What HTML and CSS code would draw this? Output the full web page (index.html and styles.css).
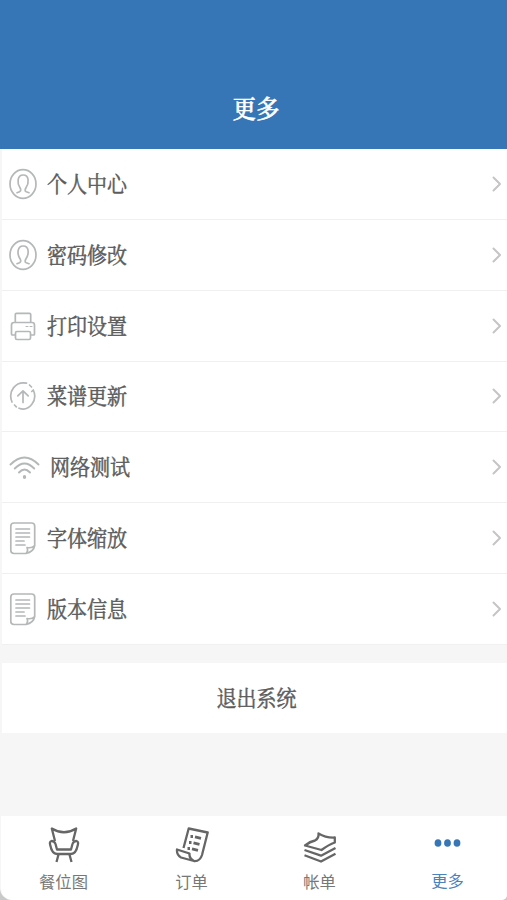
FILE: index.html
```html
<!DOCTYPE html>
<html lang="zh-CN">
<head>
  <meta charset="UTF-8">
  <title>更多</title>
  <link rel="stylesheet" href="styles.css">
</head>
<body>

  <!-- Shared icon shapes -->
  <svg class="icon-defs" width="0" height="0">
    <symbol id="icon-user" viewBox="0 0 28 32">
      <ellipse cx="14" cy="16" rx="13" ry="14.3"/>
      <path d="M8 24.700l2.500-1c1.600-.700 1.500-2.100.5-4-3.100-4.700-2.900-12.700 3.200-12.700s6 8 2.800 12.700c-1.100 1.900-1.300 3.300.3 4l2.700 1"/>
    </symbol>
    <symbol id="icon-doc" viewBox="0 0 28 34">
      <path d="M17 32.500H5Q1.800 32.500 1.800 29.500V5Q1.800 2 5 2H22.500Q25.700 2 25.700 5V24.500Q24.500 31 17 32.500Q19.500 30 18 26.500Q23 27.500 25.700 24.500"/>
      <path d="M7 8h13.500M7 12h13.500M7 16h13.500M7 20h8M7 24h9"/>
    </symbol>
    <symbol id="icon-arrow" viewBox="0 0 10 16">
      <path d="M1.500 1.500L8 8L1.500 14.500"/>
    </symbol>
  </svg>

  <div class="page">
    <header class="header">
      <h1>更多</h1>
    </header>

    <ul class="menu">
      <li class="menu-item">
        <svg class="icon" width="28" height="32"><use href="#icon-user"/></svg>
        <span class="label">个人中心</span>
        <svg class="arrow" width="10" height="16"><use href="#icon-arrow"/></svg>
      </li>
      <li class="menu-item">
        <svg class="icon" width="28" height="32"><use href="#icon-user"/></svg>
        <span class="label">密码修改</span>
        <svg class="arrow" width="10" height="16"><use href="#icon-arrow"/></svg>
      </li>
      <li class="menu-item">
        <svg class="icon" width="28" height="32" viewBox="0 0 28 32">
          <path d="M6.300 12V4.500Q6.300 3.300 7.500 3.300H20.500Q21.700 3.300 21.700 4.500V12"/>
          <path d="M6 25H3.500Q2.500 25 2.500 24V15Q2.500 12.500 5 12.500H23Q25.500 12.500 25.500 15V24Q25.500 25 24.500 25H22"/>
          <rect x="6.500" y="21.500" width="15" height="8" rx="1.500"/>
          <path class="faint" d="M17 16.500h2M21 16.500h2"/>
        </svg>
        <span class="label">打印设置</span>
        <svg class="arrow" width="10" height="16"><use href="#icon-arrow"/></svg>
      </li>
      <li class="menu-item">
        <svg class="icon" width="28" height="32" viewBox="0 0 28 32">
          <path d="M17.500 3.200C7 1 -1.500 11 3 22M10 28.200C20.500 32 29 20 24.300 10L22.800 11.500M20.500 5L22.500 7M5.500 25L7.300 26.800"/>
          <path d="M14 22.500V11M8.800 15.900L14 10.800L19.200 15.900"/>
        </svg>
        <span class="label">菜谱更新</span>
        <svg class="arrow" width="10" height="16"><use href="#icon-arrow"/></svg>
      </li>
      <li class="menu-item">
        <svg class="icon icon-wifi" width="31" height="28" viewBox="0 0 31 28">
          <path d="M1.500 11.500Q15.500-2.500 29.500 11.500M5.800 15.500Q15.500 5.500 25.200 15.500M10 19.500Q15.500 13.500 21 19.500"/>
          <ellipse class="dot" cx="15.500" cy="24" rx="1.700" ry="1.900"/>
        </svg>
        <span class="label">网络测试</span>
        <svg class="arrow" width="10" height="16"><use href="#icon-arrow"/></svg>
      </li>
      <li class="menu-item">
        <svg class="icon" width="28" height="34"><use href="#icon-doc"/></svg>
        <span class="label">字体缩放</span>
        <svg class="arrow" width="10" height="16"><use href="#icon-arrow"/></svg>
      </li>
      <li class="menu-item">
        <svg class="icon" width="28" height="34"><use href="#icon-doc"/></svg>
        <span class="label">版本信息</span>
        <svg class="arrow" width="10" height="16"><use href="#icon-arrow"/></svg>
      </li>
    </ul>

    <button class="logout"><span class="label">退出系统</span></button>

    <!-- Bottom navigation -->
    <nav class="tabs">
      <a class="tab">
        <svg width="32" height="38" viewBox="0 0 32 38">
          <path d="M7 16L3.800 3.500Q16 11 28.200 3.500L25 16"/>
          <path d="M9 24.500L7.500 19Q6.500 16 3.500 16Q1.200 16.500 2.200 20Q4 29 9 29H23Q28 29 29.800 20Q30.800 16.500 28.500 16Q25.500 16 24.500 19L23 24.500Z"/>
          <path d="M10.500 29.500L8.500 37M21.500 29.500L23.500 37"/>
        </svg>
        <span>餐位图</span>
      </a>
      <a class="tab">
        <svg width="34" height="38" viewBox="0 0 34 38">
          <path d="M8.500 23L13.700 3.500L32.700 7.500L27 30Q25 36.500 19 36L6 32.500Q1.500 30 2 24.500L14.500 28.500Q14 33.500 19 36"/>
          <path class="lines" d="M15.500 11.500h2.500M20 11.800l6 1.500M14 17.500h2.500M18.500 17.800l6 1.500M12.500 23.500h2.500M17 23.800l6 1.500"/>
        </svg>
        <span>订单</span>
      </a>
      <a class="tab">
        <svg width="34" height="38" viewBox="0 0 34 38">
          <path d="M15.500 8.500Q23 13 31.800 12.500V17.500Q26 19.500 18.500 25L2 20.500Q7 16.500 12 15.500Q16 13.500 15.500 8.500Z"/>
          <path d="M1.500 25L18 30.700L32.500 23M1.500 30.200L18 36.500L32.500 28.700"/>
        </svg>
        <span>帐单</span>
      </a>
      <a class="tab active">
        <svg width="28" height="38" viewBox="0 0 28 38">
          <ellipse cx="4" cy="18" rx="3.400" ry="3.800"/>
          <ellipse cx="13.500" cy="18" rx="3.400" ry="3.800"/>
          <ellipse cx="23" cy="18" rx="3.400" ry="3.800"/>
        </svg>
        <span>更多</span>
      </a>
    </nav>
  </div>

</body>
</html>
```

FILE: styles.css
```css
* {
  box-sizing: border-box;
}

body {
  margin: 0;
  background: #c9c9c9;
  font-family: "Noto Serif CJK SC", "Noto Sans CJK SC", sans-serif;
  color: #5c5c5c;
}

.icon-defs {
  position: absolute;
}

.page {
  display: flex;
  flex-direction: column;
  height: 900px;
  background: #f6f6f6;
  border-radius: 0 0 5px 12px;
  overflow: hidden;
}

.header {
  display: flex;
  justify-content: center;
  height: 149px;
  padding: 90px 0 0 5px;
  background: #3676b6;
}

.header h1 {
  margin: 0;
  font-size: 23.5px;
  font-weight: 500;
  line-height: 36px;
  color: #fff;
  -webkit-text-stroke: 0.5px #fff;
  transform: scaleY(1.08);
}

.menu {
  height: 496px;
  margin: 0 0 18px;
  padding: 0 0 0 2px;
  list-style: none;
  display: grid;
  grid-template-rows: repeat(7, 1fr);
}

.menu-item {
  display: flex;
  align-items: center;
  padding: 0 5px 0 7px;
  background: #fff;
  border-bottom: 1px solid #f0f0f0;
}

.icon,
.arrow {
  flex: none;
  fill: none;
  stroke: #b4b8b8;
  stroke-width: 1.7;
  stroke-linecap: round;
  stroke-linejoin: round;
}

.icon {
  margin-right: 10px;
}

.icon-wifi {
  margin-right: 10px;
  stroke-width: 1.9;
}

.icon .dot {
  fill: #b4b8b8;
  stroke: none;
}

.icon .faint {
  stroke-width: 1;
}

.label {
  padding-bottom: 2px;
  font-size: 20px;
  font-weight: 400;
  line-height: 30px;
  -webkit-text-stroke: 0.45px #5c5c5c;
  transform: scaleY(1.08);
}

.arrow {
  margin-left: auto;
  stroke: #c5c5c5;
  stroke-width: 2;
}

.logout {
  height: 70px;
  margin: 0 0 0 2px;
  padding: 0 0 0 4px;
  border: none;
  background: #fff;
  color: inherit;
  font-family: inherit;
}

.logout .label {
  display: inline-block;
}

.tabs {
  display: grid;
  grid-template-columns: repeat(4, 128px);
  height: 84px;
  margin: auto 0 0 1px;
  padding-top: 9px;
  background: #fff;
  border-radius: 0 0 5px 12px;
}

.tab {
  display: flex;
  flex-direction: column;
  align-items: center;
  padding-right: 3px;
  font-family: "Noto Sans CJK SC", sans-serif;
  font-size: 16.3px;
  font-weight: 400;
  line-height: 24px;
  color: #777;
}

.tab svg {
  margin-bottom: 6px;
  fill: none;
  stroke: #666;
  stroke-width: 2.3;
  stroke-linejoin: round;
}

.tab .lines {
  stroke-width: 2.8;
}

.tab.active {
  color: #4a82bb;
}

.tab.active svg {
  margin-bottom: 5px;
  fill: #3676b6;
  stroke: none;
}
```
